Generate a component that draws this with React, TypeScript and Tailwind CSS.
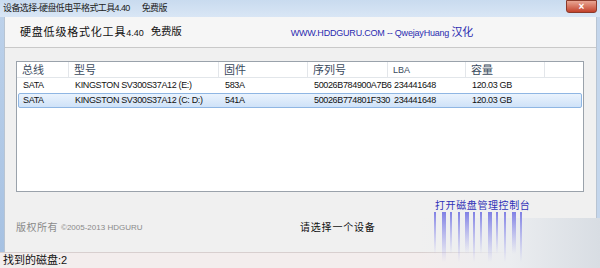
const rows = [
  { bus: 'SATA', model: 'KINGSTON SV300S37A12 (E:)', fw: '583A', sn: '50026B784900A7B6', lba: '234441648', size: '120.03 GB' },
  { bus: 'SATA', model: 'KINGSTON SV300S37A12 (C: D:)', fw: '541A', sn: '50026B774801F330', lba: '234441648', size: '120.03 GB' },
];

const cols = ['w-[52px]', 'w-[150px]', 'w-[89px]', 'w-[80px]', 'w-[78px]', 'w-[79px]'];

function Streaks() {
  const xs = [2, 10, 18, 26, 33, 41, 48, 56, 64, 72, 80, 88];
  return (
    <svg width="110" height="55" viewBox="0 0 110 55" className="absolute left-[432px] top-[212px]">
      <defs>
        <linearGradient id="fade" x1="0" y1="0" x2="0" y2="1">
          <stop offset="0" stopColor="#5a5ae0" stopOpacity="0.75" />
          <stop offset="1" stopColor="#8a8af0" stopOpacity="0" />
        </linearGradient>
      </defs>
      {xs.map((x, i) => (
        <rect key={x} x={x} y={0} width={i % 3 === 1 ? 4 : 2} height={i % 2 ? 50 : 42} fill="url(#fade)" />
      ))}
    </svg>
  );
}

export default function App() {
  return (
    <div
      className="relative h-[268px] w-[600px] overflow-hidden bg-[#f0f0f0] text-[#1a1a1a]"
      style={{ fontFamily: '"Liberation Sans", "Noto Sans CJK SC", sans-serif' }}
    >
      <div className="flex h-[17px] items-center bg-gradient-to-b from-[#c9dbef] to-[#d9e6f5] pl-[3px] text-[9px] tracking-[-0.6px] text-[#222]">
        <span>设备选择-硬盘低电平格式工具4.40</span>
        <span className="ml-[12px]">免费版</span>
        <div className="ml-auto mr-[3px] flex h-[13px] w-[31px] items-center justify-center self-start rounded-b-[3px] border border-[#8b3a2a] bg-gradient-to-b from-[#e8a593] to-[#c2402a] text-[10px] font-bold leading-none tracking-normal text-white">
          ×
        </div>
      </div>

      <div className="flex h-[235px]">
        <div className="w-[4px] bg-gradient-to-b from-[#bcd1ea] to-[#a6c1e2]" />
        <div className="flex flex-1 flex-col border-l border-[#b8c4d2]">
          <div className="flex h-[31px] items-center whitespace-nowrap border-b border-[#c9c9c9] bg-[#f6f6f6] pl-[15px]">
            <span className="text-[11px] tracking-[0.8px] text-[#111]">
              硬盘低级格式化工具<span className="text-[9px] tracking-normal">4.40</span>
            </span>
            <span className="ml-[7px] text-[10.5px] tracking-[-0.2px] text-[#111]">免费版</span>
            <span className="ml-[109px] text-[9px] tracking-[-0.2px] text-[#2b2bb0]">
              WWW.HDDGURU.COM -- QwejayHuang <span className="text-[11px]">汉化</span>
            </span>
          </div>

          <div className="ml-[11px] mt-[13px] h-[131px] w-[568px] border border-[#9aa2ab] bg-white">
            <div className="flex h-[16px] items-center border-b border-[#e2e6ea]">
              {['总线', '型号', '固件', '序列号', 'LBA', '容量'].map((h, i) => (
                <div
                  key={h}
                  className={`${cols[i]} h-full shrink-0 border-r border-[#e3e6ea] pl-[5px] ${h === 'LBA' ? 'text-[9px]' : 'text-[11px]'} leading-[16px] text-[#3b4b5d]`}
                >
                  {h}
                </div>
              ))}
            </div>
            {rows.map((r, idx) => (
              <div
                key={r.sn}
                className={`mx-[1px] flex h-[15px] items-center ${
                  idx === 1 ? 'rounded-[2px] border border-[#8fb6e3] bg-gradient-to-b from-[#eaf3fd] to-[#cfe2f8]' : 'border border-transparent'
                }`}
              >
                {[r.bus, r.model, r.fw, r.sn, r.lba, r.size].map((c, i) => (
                  <div key={i} className={`${cols[i]} shrink-0 whitespace-nowrap pl-[4px] text-[9px] leading-[13px] tracking-[-0.35px] text-[#111]`}>
                    {c}
                  </div>
                ))}
              </div>
            ))}
          </div>

          <div className="relative flex-1 whitespace-nowrap">
            <span className="absolute left-[430px] top-[6px] text-[10px] tracking-[0.6px] text-[#3030b8]">打开磁盘管理控制台</span>
            <div className="absolute left-[11px] top-[28px] flex items-center text-[#8a8a8a]">
              <span className="text-[10px] tracking-[0.5px]">版权所有</span>
              <span className="ml-[3px] text-[8px]">©2005-2013 HDGURU</span>
            </div>
            <span className="absolute left-[295px] top-[28px] text-[10px] tracking-[0.8px] text-[#111]">请选择一个设备</span>
          </div>
        </div>
        <div className="w-[4px] border-l border-[#b8c4d2] bg-[#c4d6ec]" />
      </div>

      <div className="flex h-[16px] items-center border-t border-[#d8cfcf] bg-[#f3eded] pl-[3px] text-[11px] text-[#111]">
        找到的磁盘:2
      </div>

      <div className="absolute left-[420px] top-[218px] h-[50px] w-[180px] bg-gradient-to-l from-[#d8dde3] via-[#ebedf0] to-transparent" />
      <Streaks />
    </div>
  );
}
